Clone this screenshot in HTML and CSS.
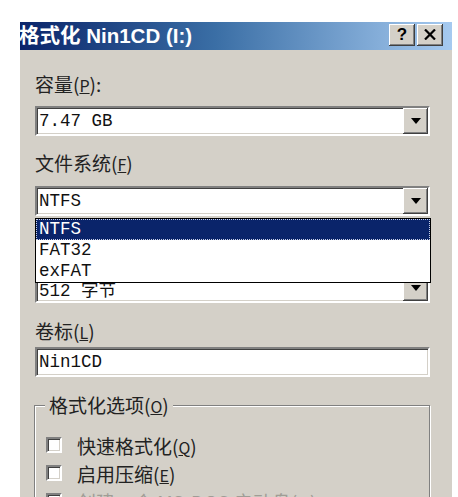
FILE: index.html
```html
<!DOCTYPE html>
<html lang="zh-CN">
<head>
    <meta charset="UTF-8">
    <title>格式化 Nin1CD (I:)</title>
    <link rel="stylesheet" href="styles.css">
</head>
<body>

    <div class="dialog">
        <div class="titlebar">
            <span class="title">格式化 Nin1CD (I:)</span>
            <div class="title-buttons">
                <span class="tbtn">?</span>
                <span class="tbtn">
                    <svg width="12" height="11" viewBox="0 0 12 11"><path d="M1 0.5 L11 10.5 M11 0.5 L1 10.5" stroke="#000" stroke-width="2.2" fill="none"/></svg>
                </span>
            </div>
        </div>

        <div class="content">
            <div class="label label-capacity">容量(<u>P</u>):</div>
            <div class="combo combo-capacity">
                <span class="combo-text">7.47 GB</span>
                <span class="combo-btn"><svg width="10" height="6" viewBox="0 0 10 6"><polygon points="0,0 10,0 5,6" fill="#000"/></svg></span>
            </div>

            <div class="label label-fs">文件系统(<u>F</u>)</div>
            <div class="combo combo-fs">
                <span class="combo-text">NTFS</span>
                <span class="combo-btn"><svg width="10" height="6" viewBox="0 0 10 6"><polygon points="0,0 10,0 5,6" fill="#000"/></svg></span>
                <!-- open dropdown list lies over the next field -->
                <ul class="dropdown">
                    <li class="selected">NTFS</li>
                    <li>FAT32</li>
                    <li>exFAT</li>
                </ul>
            </div>

            <div class="label label-unit">分配单元大小(<u>A</u>)</div>
            <div class="combo combo-unit">
                <span class="combo-text">512 字节</span>
                <span class="combo-btn"><svg width="10" height="6" viewBox="0 0 10 6"><polygon points="0,0 10,0 5,6" fill="#000"/></svg></span>
            </div>

            <div class="label label-volume">卷标(<u>L</u>)</div>
            <div class="textbox">Nin1CD</div>

            <fieldset class="group">
                <legend>格式化选项(<u>O</u>)</legend>
                <div class="check-row"><span class="checkbox"></span><span>快速格式化(<u>Q</u>)</span></div>
                <div class="check-row"><span class="checkbox"></span><span>启用压缩(<u>E</u>)</span></div>
                <div class="check-row disabled"><span class="checkbox"></span><span>创建一个 MS-DOS 启动盘(<u>M</u>)</span></div>
            </fieldset>
        </div>
    </div>

</body>
</html>
```

FILE: styles.css
```css
body {
    margin: 0;
    padding: 22px 6px 0 20px;
    height: 497px;
    box-sizing: border-box;
    overflow: hidden;
    background-color: #fff;
    font-family: "Noto Sans CJK SC", "Liberation Sans", sans-serif;
}

.dialog {
    width: 432px;
    background-color: #d4d0c8;
    height: 520px;
}

.titlebar {
    height: 28px;
    display: flex;
    align-items: center;
    justify-content: space-between;
    padding: 0 9px 0 0;
    background: linear-gradient(to right, #0a246a 0%, #3a6ea5 45%, #a6caf0 100%);
}

.title {
    color: #fff;
    font-family: "Liberation Sans", "Noto Sans CJK SC", sans-serif;
    font-weight: bold;
    font-size: 20.5px;
    line-height: 28px;
    white-space: nowrap;
    margin-left: -1px;
}

.title-buttons {
    display: flex;
    gap: 2px;
    margin-top: -3px;
}

.tbtn {
    width: 26px;
    height: 22px;
    display: flex;
    align-items: center;
    justify-content: center;
    background-color: #d4d0c8;
    box-shadow: inset -1px -1px #404040, inset 1px 1px #fff, inset -2px -2px #808080;
    font-family: "Liberation Sans", sans-serif;
    font-weight: bold;
    font-size: 17px;
    color: #000;
}

.content {
    padding: 22px 22px 0 15px;
}

.label {
    font-size: 19px;
    line-height: 24px;
    color: #222;
    white-space: nowrap;
}

.label u, .group u, .check-row u {
    font-size: 16px;
}

.combo, .textbox {
    position: relative;
    height: 30px;
    box-sizing: border-box;
    display: flex;
    align-items: center;
    background-color: #fff;
    border: 2px solid;
    border-color: #808080 #fff #fff #808080;
    box-shadow: inset 1px 1px #404040, inset -1px -1px #d4d0c8;
    padding-left: 2px;
    font-family: "Liberation Mono", "Noto Sans CJK SC", monospace;
    font-size: 17.5px;
    color: #111;
}

.combo-text {
    flex: 1;
    white-space: nowrap;
}

.combo-btn {
    width: 25px;
    height: 26px;
    display: flex;
    align-items: center;
    justify-content: center;
    background-color: #d4d0c8;
    box-shadow: inset -1px -1px #404040, inset 1px 1px #fff, inset -2px -2px #808080;
}

.combo-capacity {
    margin-top: 9px;
}

.label-fs {
    margin-top: 15px;
}

.combo-fs {
    margin-top: 10px;
    z-index: 2;
}

.label-unit {
    margin-top: 24px;
}

.combo-unit {
    margin-top: 8px;
}

.label-volume {
    margin-top: 16px;
}

.textbox {
    margin-top: 3px;
}

.dropdown {
    position: absolute;
    top: 30px;
    left: -2px;
    right: -3px;
    margin: 0;
    padding: 0;
    list-style: none;
    background-color: #fff;
    border: 1px solid #000;
}

.dropdown li {
    height: 21px;
    line-height: 21px;
    padding-left: 3px;
    color: #111;
}

.dropdown li.selected {
    background-color: #0a246a;
    color: #fff;
    outline: 1px dotted #c8d0e8;
    outline-offset: -1px;
}

.group {
    margin: 18px 0 0 -1px;
    padding: 15px 10px 0 10px;
    border: 1px solid #808080;
    box-shadow: inset 1px 1px #fff, 1px 1px #fff;
    height: 160px;
}

.group legend {
    padding: 0 4px;
    font-size: 19px;
    line-height: 20px;
    color: #222;
    background-color: #d4d0c8;
}

.check-row {
    height: 28px;
    display: flex;
    align-items: center;
    gap: 15px;
    font-size: 19px;
    color: #222;
    white-space: nowrap;
}

.check-row.disabled {
    color: #a09d96;
}

.checkbox {
    width: 16px;
    height: 16px;
    margin-left: 1px;
    box-sizing: border-box;
    background-color: #fff;
    border: 2px solid;
    border-color: #808080 #fff #fff #808080;
    box-shadow: inset 1px 1px #404040, inset -1px -1px #d4d0c8;
}
```
